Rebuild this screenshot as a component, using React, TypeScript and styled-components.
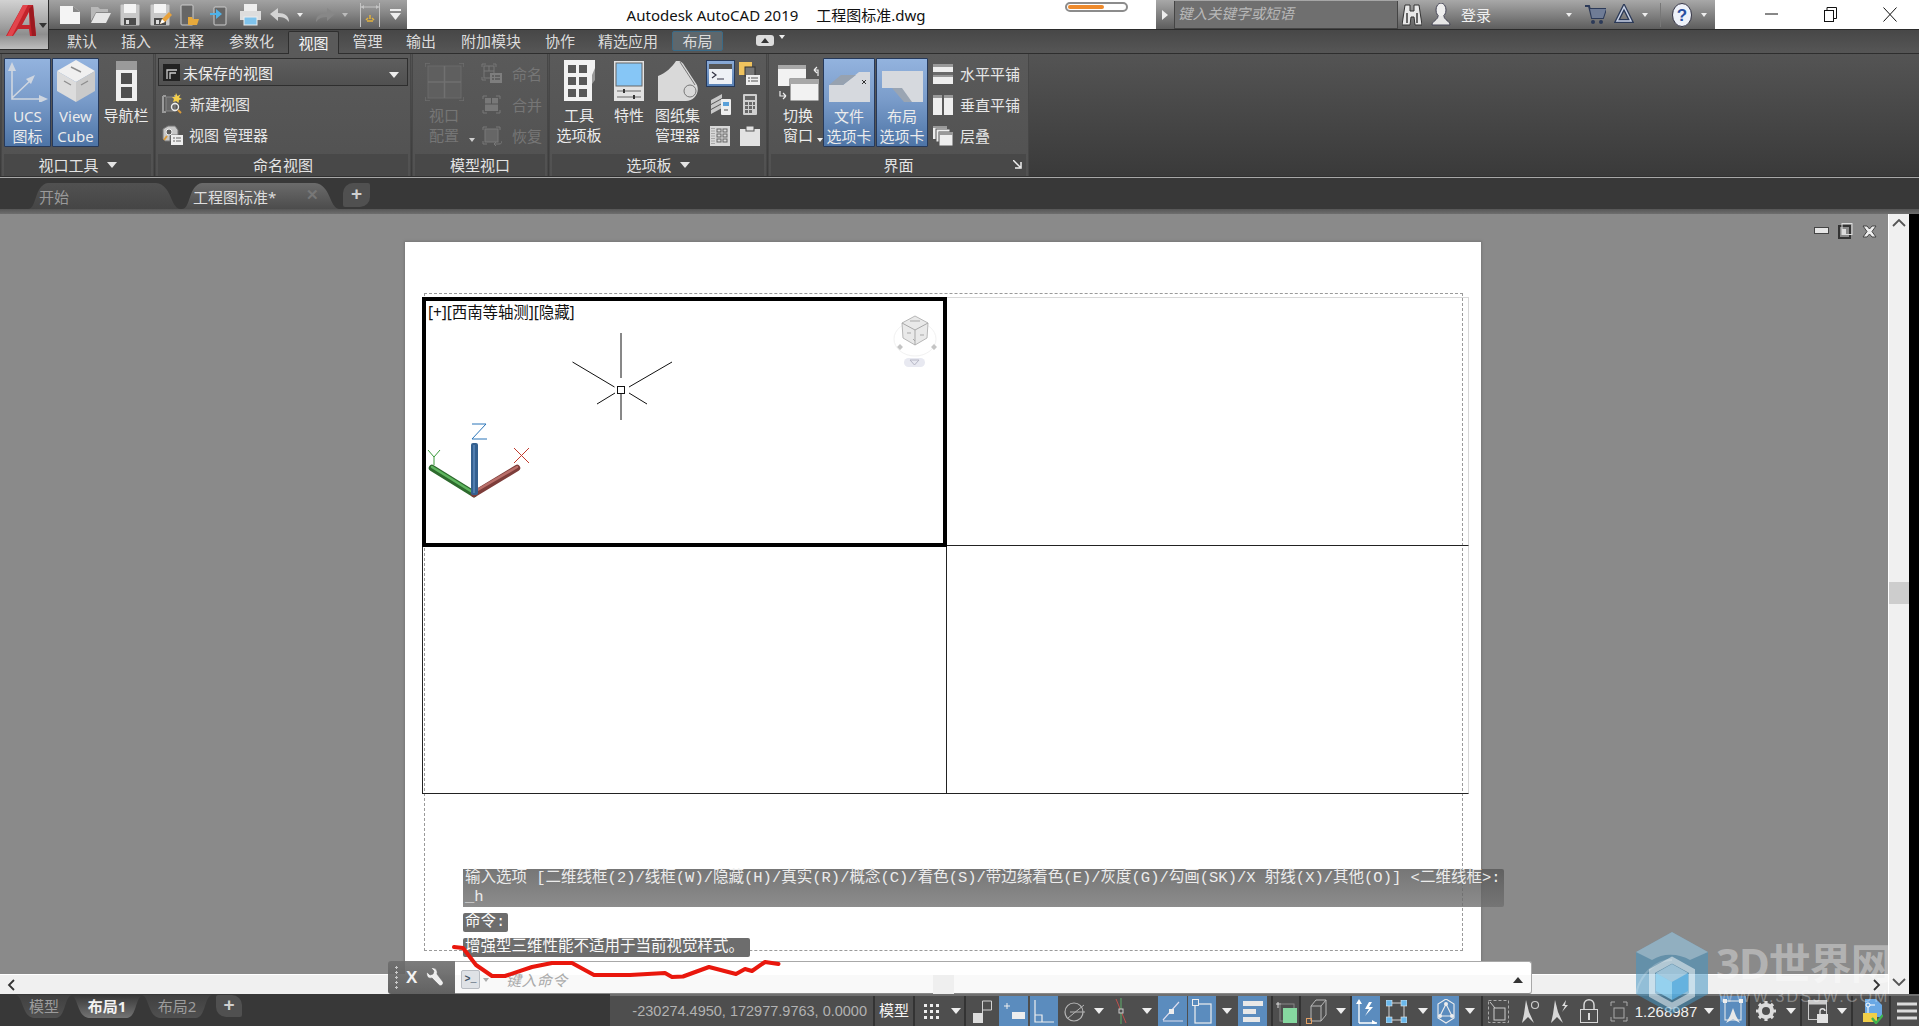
import React from 'react';
import styled, { createGlobalStyle } from 'styled-components';

const Global = createGlobalStyle`
  html, body { margin: 0; padding: 0; width: 1919px; height: 1026px; overflow: hidden; background: #383838; }
  * { box-sizing: border-box; }
  body { font-family: "Noto Sans", "Noto Sans CJK SC", sans-serif; }
`;

const Page = styled.div`position: relative; width: 1919px; height: 1026px; display: flex; flex-direction: column; overflow: hidden;`;

/* ---------- title bar ---------- */
const TitleBar = styled.header`display: flex; height: 29px; flex: none;`;
const AppButton = styled.div`
  position: absolute; left: 0; top: 0; width: 49px; height: 50px; z-index: 3;
  background: linear-gradient(#d2d2d2, #a8a8a8 45%, #8e8e8e 70%, #bdbdbd);
  border-right: 1px solid #2c2c2c; border-bottom: 1px solid #2c2c2c;
  display: flex; align-items: flex-start; padding: 3px 0 0 4px; gap: 1px;
`;
const AppCaret = styled.span`margin-top: 20px; width: 0; height: 0; border: 4px solid transparent; border-top: 5px solid #333; border-bottom: 0;`;
const Qat = styled.div`
  margin-left: 49px; width: 358px; background: linear-gradient(#a2a2a2, #8a8a8a 40%, #5c5c5c);
  display: flex; align-items: center; padding-left: 11px;
`;
const QatSlot = styled.span<{ $w: number }>`width: ${p => p.$w}px; flex: none; display: flex; align-items: center; justify-content: flex-start;`;
const TitleArea = styled.div`
  width: 750px; background: #fff; position: relative; display: flex; align-items: center; padding-left: 220px; gap: 18px;
  font-size: 15px; color: #111; white-space: nowrap;
`;
const Progress = styled.div`
  position: absolute; left: 658px; top: 2px; width: 63px; height: 10px; border: 2px solid #8c8c8c; border-radius: 5px; background: #fff;
  padding: 1px;
  &::before { content: ""; display: block; width: 36px; height: 4px; background: #ee8a2c; border-radius: 2px; }
`;
const InfoBar = styled.div`
  width: 559px; background: linear-gradient(#a8a8a8, #8a8a8a 40%, #5d5d5d); display: flex; align-items: center; color: #f0f0f0; font-size: 15px;
`;
const SearchGrip = styled.span`width: 18px; height: 100%; display: flex; align-items: center; justify-content: center;`;
const SearchBox = styled.div`
  width: 224px; height: 28px; background: #6f6f6f; border: 1px solid #444; border-top: 0; color: #b8b8b8; font-style: italic;
  font-size: 14.5px; padding: 0 0 4px 3px; display: flex; align-items: center; white-space: nowrap;
`;
const InfoSlot = styled.span<{ $w: number; $sep?: boolean }>`
  width: ${p => p.$w}px; flex: none; height: 100%; display: flex; align-items: center; justify-content: center;
  ${p => p.$sep ? 'border-right: 1px solid #777; height: 24px;' : ''}
`;
const WindowButtons = styled.div`flex: 1; background: #fff; display: flex; align-items: center;`;
const WinSlot = styled.span`width: 59px; display: flex; justify-content: center; &:first-child { margin-left: 27px; }`;

const Tri = styled.span<{ $c?: string; $s?: number }>`
  display: inline-block; flex: none; width: 0; height: 0;
  border-left: ${p => p.$s ?? 4}px solid transparent; border-right: ${p => p.$s ?? 4}px solid transparent;
  border-top: ${p => (p.$s ?? 4) + 1}px solid ${p => p.$c ?? '#eee'};
`;
const TriRight = styled.span`width: 0; height: 0; border-top: 5px solid transparent; border-bottom: 5px solid transparent; border-left: 6px solid #eee;`;

/* ---------- ribbon tabs ---------- */
const TabsRow = styled.nav`
  flex: none; height: 25px; margin-top: 0; border-top: 1px solid #2b2b2b; border-bottom: 1px solid #2e2e2e;
  background: linear-gradient(#474747, #565656); display: flex; align-items: flex-end; padding-left: 55px;
`;
const RibbonTab = styled.span<{ $w: number; $active?: boolean; $ctx?: boolean }>`
  width: ${p => p.$w}px; flex: none; text-align: center; font-size: 15px; color: #dcdcdc; line-height: 22px; height: 23px;
  ${p => p.$active ? 'background:#5a5a5a; border:1px solid #2e2e2e; border-bottom:0; border-radius:2px 2px 0 0; color:#f4f4f4; margin-bottom:-1px;' : ''}
  ${p => p.$ctx ? 'background:#5e676c; border:1px solid #3a6a86; border-radius:2px; height:20px; line-height:18px; margin-bottom:2px;' : ''}
`;
const CollapseBtn = styled.span`
  margin: 0 0 7px 33px; width: 18px; height: 11px; background: #dcdcdc; border-radius: 3px; display: flex; align-items: center; justify-content: center;
`;
const TinyUp = styled.span`width: 0; height: 0; border-left: 4px solid transparent; border-right: 4px solid transparent; border-bottom: 5px solid #333;`;
const CollapseCaret = styled.span`margin: 0 0 9px 5px;`;

/* ---------- ribbon ---------- */
const Ribbon = styled.section`
  flex: none; height: 123px; display: flex; border-bottom: 1px solid #303030;
  background: linear-gradient(#545454, #3a3a3a);
`;
const Panel = styled.div<{ $w: number }>`
  width: ${p => p.$w}px; flex: none; display: flex; flex-direction: column; margin-left: 1px;
  border-left: 1px solid #474747; border-right: 1px solid #474747;
  background: linear-gradient(#5a5a5a, #515151);
`;
const PanelBody = styled.div<{ $pad?: number }>`flex: 1; display: flex; padding: 4px 0 0 ${p => p.$pad ?? 0}px; min-height: 0; gap: 0;`;
const PanelTitle = styled.div`
  flex: none; height: 22px; background: #484848; margin: 0 2px; color: #e4e4e4; font-size: 15px; display: flex; align-items: center; justify-content: center; gap: 8px;
  position: relative; line-height: 1;
`;
const Launcher = styled.span`position: absolute; right: 4px; top: 6px; display: flex;`;
const BigTool = styled.div<{ $w: number; $on?: boolean; $off?: boolean }>`
  width: ${p => p.$w}px; flex: none; height: 89px; display: flex; flex-direction: column; align-items: center;
  color: ${p => p.$off ? '#767676' : '#ececec'}; font-size: 15px; line-height: 20px; position: relative; white-space: nowrap;
  ${p => p.$on ? 'background: linear-gradient(#93b3de, #7b9dcb 45%, #4d74a6); border: 1px solid #26395a; border-radius: 1px; margin-right: 1px;' : ''}
`;
const BigIcon = styled.div`height: 47px; flex: none; display: flex; align-items: flex-end; justify-content: center; padding-bottom: 4px;`;
const CaretAt = styled.span`position: absolute; right: 0; top: 68px;`;
const Stack = styled.div<{ $ml?: number }>`display: flex; flex-direction: column; margin-left: ${p => p.$ml ?? 0}px; flex: none;`;
const Combo = styled.div`
  width: 250px; height: 28px; margin: 0 0 2px 2px; background: linear-gradient(#5e5e5e, #505050); border: 1px solid #2e2e2e; display: flex; align-items: center;
  padding: 0 8px 0 4px; color: #eee; font-size: 15px; gap: 3px; justify-content: flex-start;
  & > i { margin-left: auto; }
`;
const SmallRow = styled.div<{ $off?: boolean; $gap?: number; $pad?: number }>`
  height: 31px; display: flex; align-items: center; gap: ${p => p.$gap ?? 7}px; padding-left: ${p => p.$pad ?? 0}px; font-size: 15px;
  color: ${p => p.$off ? '#767676' : '#e6e6e6'}; white-space: nowrap;
`;
const MiniGrid = styled.div`display: grid; grid-template-columns: 30px 29px; grid-auto-rows: 31px; align-items: center; justify-items: center;`;
const MiniOn = styled.span`width: 29px; height: 27px; background: linear-gradient(#8aaad6, #5a82b6); border: 1px solid #26395a; display: flex; align-items: center; justify-content: center;`;

/* ---------- doc tabs ---------- */
const DocBar = styled.div`
  flex: none; height: 32px; background: #383838; border-top: 1px solid #a8a8a8; display: flex; align-items: flex-end; padding: 0 0 0 28px;
`;
const tabPath = (w: number) => `path('M0 27 C9 27 6 3 20 1 L${w - 24} 1 C${w - 8} 3 ${w - 10} 25 ${w} 27 Z')`;
const DocTab = styled.div<{ $w: number; $on?: boolean }>`
  width: ${p => p.$w}px; height: 27px; flex: none; margin-right: 2px; clip-path: ${p => tabPath(p.$w)};
  background: ${p => p.$on ? 'linear-gradient(#6c6c6c, #4c4c4c)' : 'linear-gradient(#525252, #454545)'};
  color: ${p => p.$on ? '#dedede' : '#9a9a9a'}; font-size: 15px; display: flex; align-items: center; padding-left: 11px; padding-top: 1px; white-space: nowrap; position: relative;
`;
const DocClose = styled.span`position: absolute; right: 20px; top: 4px; color: #777; font-weight: 700; font-size: 15px; font-family: "Liberation Sans", sans-serif;`;
const PlusTab = styled.div`
  width: 27px; height: 24px; margin: 0 0 2px 2px; background: #505050; border-radius: 10px 2px 10px 2px; color: #d0d0d0; font: 700 19px/22px "Liberation Sans", sans-serif; text-align: center;
`;
const DocShade = styled.div`flex: none; height: 5px; background: linear-gradient(#565656, #6e6e6e);`;

/* ---------- workspace ---------- */
const Workspace = styled.div`flex: 1; min-height: 0; display: flex;`;
const WorkColumn = styled.div`width: 1888px; flex: none; display: flex; flex-direction: column;`;
const Canvas = styled.main`flex: 1; min-height: 0; background: #8a8a8a; padding: 28px 0 0 405px; overflow: hidden; position: relative;`;
const Paper = styled.div`width: 1076px; height: 760px; background: #fff; box-shadow: 0 0 2px 1px #777; padding: 51px 0 0 19px;`;
const PrintFrame = styled.div`width: 1039px; height: 658px; border: 1px dashed #9a9a9a; padding: 3px 0 0 0;`;
const ViewGrid = styled.div`width: 1047px; margin-left: -3px; display: grid; grid-template-columns: 525px 522px; grid-template-rows: 249px 248px;`;
const ActiveView = styled.div`border: 4px solid #000; position: relative; margin-bottom: -1px; background: #fff;`;
const PlainView = styled.div<{ $edges: string }>`${p => p.$edges}`;
const ViewLabel = styled.div`position: absolute; left: 2px; top: 2px; font-size: 15.5px; color: #111; white-space: nowrap; line-height: 18px; letter-spacing: -.1px;`;
const DrawingLayer = styled.svg`position: absolute; left: -4px; top: -4px;`;
const WinControls = styled.div`position: absolute; right: 11px; top: 9px; display: flex; gap: 9px; align-items: center;`;
const HScroll = styled.div`flex: none; height: 20px; background: #f0f0f0; border-top: 1px solid #fff; display: flex; align-items: center; justify-content: space-between; padding: 0 7px; color: #444;`;
const VScroll = styled.aside`
  width: 21px; flex: none; background: #f0f0f0; border-left: 1px solid #fff; display: flex; flex-direction: column; justify-content: flex-start; align-items: center; padding: 5px 0 8px; position: relative;
`;
const VThumb = styled.div`width: 100%; height: 22px; background: #cdcdcd; margin-top: 355px; margin-bottom: auto;`;
const BlackStrip = styled.div`flex: 1; background: #000;`;

/* ---------- overlays ---------- */
const HistoryBlock = styled.div`
  position: absolute; left: 463px; top: 869px; width: 1041px; height: 38px; border-radius: 0 2px 2px 0;
  background: linear-gradient(rgba(88,88,88,.82), rgba(112,112,112,.8)); color: #ececec;
  font: 15.5px/19px "Liberation Mono", "Noto Sans CJK SC", monospace; padding-left: 2px; white-space: pre;
`;
const HistoryChip = styled.div<{ $top: number; $w: number }>`
  position: absolute; left: 463px; top: ${p => p.$top}px; width: ${p => p.$w}px; height: 19px; border-radius: 2px; background: #6d6d6d; color: #fafafa;
  font: 15.5px/19px "Liberation Mono", "Noto Sans CJK SC", monospace; padding-left: 2px; white-space: pre;
`;
const CommandLine = styled.div`
  position: absolute; left: 388px; top: 961px; width: 1144px; height: 33px; display: flex; z-index: 2;
`;
const CmdHandle = styled.div`
  width: 67px; flex: none; background: linear-gradient(rgba(110,110,110,.9), rgba(90,90,90,.95)); border-radius: 3px 0 0 3px; display: flex; align-items: center; color: #f0f0f0; position: relative;
`;
const Grip = styled.span`width: 5px; height: 26px; margin-left: 6px; background-image: radial-gradient(circle, #c8c8c8 1.2px, transparent 1.4px); background-size: 5px 5px;`;
const CmdX = styled.span`margin-left: 7px; font: 700 17px/1 "Liberation Sans", sans-serif; color: #f2f2f2;`;
const CmdWrench = styled.span`margin-left: 8px; display: flex;`;
const CmdInput = styled.div`
  flex: 1; border: 1px solid #a8a8a8; border-left: 0; border-bottom-color: #888; border-radius: 0 3px 3px 0;
  background: linear-gradient(#fff 43%, #f9f9f9 43%); display: flex; align-items: center; padding: 4px 8px 0 6px; gap: 3px; position: relative;
`;
const CmdPrompt = styled.span`width: 19px; height: 19px; background: #dfe2e6; border: 1px solid #b8bcc2; border-radius: 2px; display: flex; align-items: center; justify-content: center; color: #456; font: 700 10px/1 "Liberation Mono", monospace;`;
const CmdPlaceholder = styled.span`margin-left: 14px; color: #aaa; font-size: 15px; font-style: italic; letter-spacing: .4px;`;
const CmdUp = styled.span`margin-left: auto; width: 0; height: 0; border-left: 5px solid transparent; border-right: 5px solid transparent; border-bottom: 6px solid #333;`;
const FaintThumb = styled.span`position: absolute; left: 478px; top: 13px; width: 21px; height: 19px; background: #efefef;`;
const Scribble = styled.svg`position: absolute; left: 440px; top: 940px; z-index: 4; pointer-events: none;`;
const Watermark = styled.div`position: absolute; left: 1636px; top: 930px; width: 280px; height: 84px; z-index: 4; pointer-events: none; display: flex; gap: 8px;`;
const MarkText = styled.div`padding-top: 7px; display: flex; flex-direction: column; align-items: center;`;
const MarkTitle = styled.div`font: 700 42px/52px "Noto Sans", "Noto Sans CJK SC", sans-serif; color: rgba(255,255,255,.36); white-space: nowrap; letter-spacing: -1px;`;
const MarkSub = styled.div`margin-top: -1px; font: 400 16px/18px "Liberation Sans", sans-serif; color: rgba(255,255,255,.32); letter-spacing: 2.1px; white-space: nowrap;`;

/* ---------- status bar ---------- */
const StatusBar = styled.footer`flex: none; height: 32px; background: #383838; display: flex; position: relative; z-index: 1;`;
const LayoutTabs = styled.div`width: 610px; flex: none; display: flex; align-items: flex-start; padding: 1px 0 0 16px;`;
const hang = (w: number) => `path('M0 0 C7 1 6 22 18 23 L${w - 16} 23 C${w - 6} 22 ${w - 8} 2 ${w} 0 Z')`;
const LayoutTab = styled.div<{ $w: number; $on?: boolean }>`
  width: ${p => p.$w}px; height: 23px; flex: none; margin-right: -1px; clip-path: ${p => hang(p.$w)};
  background: ${p => p.$on ? 'linear-gradient(#383838, #747474)' : 'linear-gradient(#404040, #505050)'};
  color: ${p => p.$on ? '#f2f2f2' : '#9c9c9c'}; font: ${p => p.$on ? 700 : 400} 15px/23px "Noto Sans", "Noto Sans CJK SC", sans-serif; text-align: center;
`;
const LayoutPlus = styled.div`
  width: 26px; height: 22px; margin-left: 5px; background: #505050; border-radius: 2px 10px 2px 10px; color: #cfcfcf; font: 700 19px/20px "Liberation Sans", sans-serif; text-align: center;
`;
const StatusStrip = styled.div`flex: 1; display: flex; border-top: 2px solid #6f6f6f; gap: 2px; background: #333;`;
const StatusGroup = styled.div<{ $w: number }>`width: ${p => p.$w}px; flex: none; background: #4e4e4e; display: flex; align-items: stretch;`;
const Coords = styled.div`width: 263px; flex: none; background: #4e4e4e; color: #b2b2b2; font: 14.5px/30px "Liberation Sans", sans-serif; text-align: right; padding-right: 6px;`;
const ModelTab = styled.div`width: 38px; flex: none; background: #4e4e4e; color: #f4f4f4; font-size: 15px; line-height: 29px; text-align: center;`;
const Cell = styled.span<{ $w: number; $on?: boolean; $gap?: number }>`
  width: ${p => p.$w}px; flex: none; display: flex; align-items: center; justify-content: center; margin-right: ${p => p.$gap ?? 0}px;
  ${p => p.$on ? 'background: #5b8cbe;' : ''}
`;
const ScaleText = styled.span`color: #f0f0f0; font: 15px/1 "Liberation Sans", sans-serif;`;

const S = (p: { w: number; h: number; children: React.ReactNode }) => (
  <svg width={p.w} height={p.h} viewBox={`0 0 ${p.w} ${p.h}`} fill="none" style={{ display: 'block', flex: 'none' }}>{p.children}</svg>
);

/* QAT icons */
const QNew = <S w={20} h={18}><path d="M0 0h13l7 6v12H0z" fill="#f4f4f4" /><path d="M13 0v6h7z" fill="#888" /></S>;
const QOpen = <S w={21} h={18}><path d="M1 1h7l2 2h8v3H6L1 15z" fill="#b8b8b8" /><path d="M6 7h15l-5 10H1z" fill="#e6e6e6" /></S>;
const floppy = <><rect x=".5" y=".5" width="19" height="21" rx="1" fill="#c8c8c8" /><rect x="4" y="0" width="12" height="9" fill="#f4f4f4" /><rect x="4" y="14" width="12" height="7" fill="#4c4c4c" /><rect x="6" y="16" width="3" height="4" fill="#ddd" /></>;
const QSave = <S w={20} h={22}>{floppy}</S>;
const QSaveAs = <S w={22} h={22}>{floppy}<path d="M10 20l2-5 7-7 3 3-7 7z" fill="#e8a23c" /><path d="M10 20l2-5 3 3z" fill="#fff" /></S>;
const QPhoneOpen = <S w={20} h={22}><rect x="1" y="1" width="12" height="20" rx="1" fill="#666" stroke="#ccc" /><path d="M8 13h4l1 2h6l-2 6H8z" fill="#e6a93c" /></S>;
const QPhoneUp = <S w={18} h={22}><rect x="4" y="3" width="12" height="18" rx="1" fill="#666" stroke="#ccc" /><path d="M0 9h6V5l6 5-6 5v-4H0z" fill="#4fb2e8" /></S>;
const QPrint = <S w={21} h={22}><rect x="4" y="0" width="13" height="7" fill="#eee" /><rect x="0" y="7" width="21" height="9" fill="#ddd" /><rect x="4" y="13" width="13" height="8" fill="#7fc3ec" stroke="#eee" /></S>;
const QUndo = <S w={20} h={14}><path d="M8 0L0 6l8 7V9c5 0 8 1 11 5 0-6-4-9-11-9z" fill="#d4d4d4" /></S>;
const QRedo = <S w={20} h={14}><path d="M12 0l8 6-8 7V9C7 9 4 10 1 14c0-6 4-9 11-9z" fill="#878787" /></S>;
const QMeasure = <S w={20} h={24}><path d="M.5 0v24M19.5 0v24M1 4h18" stroke="#c4c4c4" /><path d="M1 4l3-2v4zM19 4l-3-2v4z" fill="#c4c4c4" /><path d="M6 17l2-2M10 16v-4M14 17l-2-2M7 18h6" stroke="#e3b23c" strokeWidth="1.5" /></S>;
const QMenu = <S w={11} h={12}><rect width="11" height="2" fill="#eee" /><path d="M0 4h11L5.500 11z" fill="#eee" /></S>;

/* ribbon icons */
const UcsIcon = <S w={40} h={40}><path d="M4 3v34h32M4 36L24 17" stroke="#cfd6e0" strokeWidth="1.6" /><path d="M4 0l-4 9h8zM40 37l-9-4v8zM27 13l-9 4 5 5z" fill="#cfd6e0" /></S>;
const CubeIcon = <S w={38} h={42}><path d="M19 0l19 11-19 11L0 11z" fill="#f0f0f0" /><path d="M0 11l19 11v20L0 31z" fill="#dcdcdc" /><path d="M38 11L19 22v20l19-11z" fill="#cacaca" /><path d="M14 7l10 5M7 21l7 4M31 21l-7 4" stroke="#8e8e8e" strokeWidth="1.4" /></S>;
const NavIcon = <S w={21} h={40}><rect width="21" height="40" fill="#efefef" /><rect width="21" height="9" fill="#9a9a9a" /><rect x="5" y="12" width="11" height="11" fill="#4f4f4f" /><rect x="5" y="26" width="11" height="11" fill="#4f4f4f" /></S>;
const ComboIcon = <S w={17} h={17}><rect width="17" height="17" fill="#222" /><path d="M4 15V6h10M7 15V9h6" stroke="#ccc" strokeWidth="1.3" /></S>;
const NewViewIcon = <S w={21} h={22}><path d="M1 3h3M1 3v16h3M12 3h2M1 19" stroke="#9a9a9a" strokeWidth="2" /><rect x="4" y="4" width="9" height="14" fill="#666" stroke="#888" /><path d="M14 0l1.500 3 3-1.500-1.500 3 3 1.500-3 1-.5 3-2.500-2-3 1 1-3-2-2h3z" fill="#f4cf4a" /><circle cx="13" cy="14" r="3.500" stroke="#eee" strokeWidth="1.4" /><path d="M16 17l3 3" stroke="#d99a3a" strokeWidth="2" /></S>;
const MgrIcon = <S w={21} h={20}><path d="M1 14V4l5-3h7l3 4v5H8v6H3z" fill="#c8c8c8" stroke="#777" /><circle cx="7" cy="7" r="3" fill="#5e5e5e" stroke="#eee" /><path d="M2 15l3-4" stroke="#d99a3a" strokeWidth="2" /><rect x="9" y="10" width="12" height="10" fill="#eee" /><path d="M11 13h2M11 16h2M14 13h5M14 16h5" stroke="#666" /></S>;
const VpIcon = <S w={39} h={38}><path d="M0 4V0h5M34 0h5v4M0 34v4h5M34 38h5v-4" stroke="#6e6e6e" strokeWidth="1.4" /><rect x="3" y="3" width="33" height="32" fill="#5f5f5f" stroke="#6b6b6b" /><path d="M19.500 3v32M3 19h33" stroke="#707070" strokeWidth="1.5" /></S>;
const dimA = <S w={21} h={21}><path d="M1 4V1h4M12 1h3v3M1 14v3h4" stroke="#767676" /><rect x="3" y="3" width="10" height="12" stroke="#787878" /><path d="M3 8h10M8 3v5" stroke="#787878" /><rect x="9" y="10" width="12" height="10" fill="#7e7e7e" /><path d="M11 13h2M11 16h2M14 13h5M14 16h5" stroke="#444" /></S>;
const dimB = <S w={21} h={21}><path d="M2 5V2h4M15 2h4v3M2 16v3h4M15 19h4v-3" stroke="#787878" /><rect x="4" y="4" width="13" height="13" fill="#787878" /><path d="M4 10h13M10.500 4v6" stroke="#555" /></S>;
const dimC = <S w={21} h={21}><path d="M2 5V2h4M15 2h4v3M2 16v3h4" stroke="#787878" /><rect x="4" y="4" width="13" height="13" fill="#666" stroke="#787878" /><path d="M13 19h5c2 0 3-1 3-3M13 19l2-2M13 19l2 2" stroke="#787878" /></S>;
const ToolIcon = <S w={31} h={41}><path d="M0 0h31v16l-3 5v20H0z" fill="#f2f2f2" /><path d="M31 8v12l-3 4v-9z" fill="#999" /><g fill="#585858"><rect x="4" y="5" width="8" height="8" /><rect x="15" y="5" width="8" height="8" /><rect x="4" y="17" width="8" height="8" /><rect x="15" y="17" width="8" height="8" /><rect x="4" y="29" width="8" height="8" /><rect x="15" y="29" width="8" height="8" /></g></S>;
const PropIcon = <S w={30} h={40}><rect width="30" height="40" fill="#e2e2e2" /><rect x="2" y="2" width="26" height="23" fill="#86c6f6" stroke="#666" /><path d="M3 30h24M3 36h24" stroke="#666" /><path d="M10 28v4M20 34v4" stroke="#333" strokeWidth="2" /></S>;
const SheetIcon = <S w={40} h={40}><path d="M0 15C8 12 14 6 18 0c4-1 7 2 8 4l13 20c3 8-3 16-11 16H0z" fill="#d9d9d9" /><path d="M22 1l15 23" stroke="#777" /><circle cx="32" cy="30" r="6" stroke="#777" /></S>;
const CmdIcon = <S w={23} h={20}><rect width="23" height="20" fill="#eef1f6" /><rect width="23" height="5" fill="#555" /><path d="M3 8l4 3-4 3M8 15h7" stroke="#334" strokeWidth="1.2" /></S>;
const NoteIcon = <S w={21} h={23}><rect x="0" width="13" height="13" fill="#f0c35e" /><rect x="6" y="5" width="10" height="9" fill="#777" stroke="#333" /><rect x="7" y="13" width="14" height="10" fill="#eee" /><path d="M9 16h2M9 19h2M12 16h7M12 19h7" stroke="#555" /></S>;
const LayerIcon = <S w={21} h={21}><path d="M1 6l11-6v4L1 10zM1 11l11-6v4L1 15zM1 16l11-6v4L1 20z" fill="#c8c8c8" /><rect x="11" y="5" width="10" height="16" rx="1" fill="#eee" /><rect x="13" y="8" width="6" height="4" fill="#5aa0d8" /><path d="M14 16h4" stroke="#555" /></S>;
const CalcIcon = <S w={14} h={21}><rect width="14" height="21" rx="1" fill="#cfcfcf" /><rect x="2" y="2" width="10" height="4" fill="#666" /><g fill="#666"><rect x="2" y="8" width="3" height="3" /><rect x="6" y="8" width="3" height="3" /><rect x="10" y="8" width="2" height="3" /><rect x="2" y="12" width="3" height="3" /><rect x="6" y="12" width="3" height="3" /><rect x="10" y="12" width="2" height="3" /><rect x="2" y="16" width="3" height="3" /><rect x="6" y="16" width="3" height="3" /></g></S>;
const GridPal = <S w={20} h={20}><rect width="20" height="20" fill="#d8d8d8" /><path d="M2 2v16M4 2v16" stroke="#777" strokeDasharray="1 1.500" /><g stroke="#666"><rect x="7" y="3" width="4" height="3" /><rect x="13" y="3" width="4" height="3" /><rect x="7" y="8" width="4" height="3" /><rect x="13" y="8" width="4" height="3" /><rect x="7" y="13" width="4" height="3" /><rect x="13" y="13" width="4" height="3" /></g></S>;
const ClipIcon = <S w={20} h={20}><rect y="3" width="20" height="17" fill="#e2e2e2" /><rect x="6" y="0" width="8" height="5" fill="#e2e2e2" stroke="#555" /></S>;
const SwitchIcon = <S w={41} h={37}><rect y="1" width="28" height="21" fill="#f2f2f2" /><rect y="1" width="28" height="4" fill="#a8a8a8" /><path d="M36 6h4v6M36 6l3-3M36 6l3 3" stroke="#eee" strokeWidth="1.200" /><rect x="12" y="15" width="29" height="22" fill="#f2f2f2" stroke="#555" /><rect x="12" y="15" width="29" height="5" fill="#a8a8a8" /><path d="M2 27v5h6M8 32l-3-3M8 32l-3 3" stroke="#eee" strokeWidth="1.200" /></S>;
const FileTabIcon = <S w={41} h={31}><path d="M0 14h14L30 1h11v30H0z" fill="#d6d9de" /><path d="M0 14l12-10h15L14 14z" fill="#97a2b0" /><path d="M33 9l4 4M37 9l-4 4" stroke="#333" /></S>;
const LayoutTabIcon = <S w={41} h={31}><path d="M0 0h41v31H28L15 17H0z" fill="#d6d9de" /><path d="M10 17h10l10 14H22z" fill="#9aa5b3" /></S>;
const TileH = <S w={20} h={20}><rect width="20" height="20" fill="#eee" /><rect width="20" height="3" fill="#999" /><rect y="8" width="20" height="3" fill="#6a6a6a" /><rect y="11" width="20" height="2" fill="#999" /></S>;
const TileV = <S w={20} h={20}><rect width="20" height="20" fill="#eee" /><rect width="20" height="3" fill="#999" /><rect x="9" width="2" height="20" fill="#5a5a5a" /></S>;
const Cascade = <S w={20} h={20}><rect width="14" height="13" fill="#eee" /><rect width="14" height="2" fill="#999" /><rect x="3" y="3" width="14" height="13" fill="#eee" stroke="#555" /><rect x="6" y="6" width="14" height="14" fill="#eee" stroke="#555" /><rect x="6" y="6" width="14" height="3" fill="#999" /></S>;
const LaunchIcon = <S w={9} h={9}><path d="M0 0l7 7M8 2v6H2" stroke="#eee" strokeWidth="1.500" /></S>;

/* top right icons */
const Binoc = <S w={20} h={24}><path d="M3 2h5v6h4V2h5l3 20h-7l-1-8h-3l-1 8H0z" fill="#e8e8e8" stroke="#333" /><path d="M5 10v10M15 10v10" stroke="#666" strokeWidth="2" /></S>;
const UserIco = <S w={20} h={24}><ellipse cx="10" cy="7" rx="5" ry="7" fill="#eee" stroke="#445" /><path d="M7 13c0 4-6 5-6 9h18c0-4-6-5-6-9" fill="#e6e6e6" stroke="#445" /></S>;
const CartIco = <S w={21} h={21}><path d="M0 2h4l3 12h11l3-9H5" fill="none" stroke="#2c3a58" strokeWidth="2" /><path d="M5 5h16l-3 9H7z" fill="#6f7c96" /><circle cx="8" cy="18" r="2" fill="#2c3a58" /><circle cx="16" cy="18" r="2" fill="#2c3a58" /></S>;
const TriIco = <S w={20} h={21}><path d="M10 3L3 17h14z" stroke="#2c3a58" strokeWidth="4" fill="none" /><path d="M10 3L3 17h14z" stroke="#c9d2e6" strokeWidth="1.500" fill="none" /></S>;
const HelpIco = <S w={20} h={24}><ellipse cx="10" cy="12" rx="9.500" ry="11.500" fill="#eef2fa" stroke="#334" /><text x="10" y="18" textAnchor="middle" fontFamily="Liberation Sans" fontWeight="700" fontSize="17" fill="#2a50a0">?</text></S>;
const MinW = <S w={14} h={3}><path d="M0 1h13" stroke="#111" /></S>;
const MaxW = <S w={13} h={15}><rect x=".5" y="3.500" width="9" height="11" stroke="#111" /><path d="M3 3V.5h9.500v11H10" stroke="#111" /></S>;
const CloseW = <S w={14} h={15}><path d="M.5 .5l13 14M13.500 .5l-13 14" stroke="#111" /></S>;

/* status bar icons */
const sS = '#d2d2d2';
const StatIcons = {
  grid: <S w={16} h={16}><g fill="#eee">{[1, 7, 13].flatMap(x => [1, 7, 13].map(y => <rect key={x + '-' + y} x={x} y={y} width="3" height="3" />))}</g></S>,
  snap: <S w={19} h={23}><rect x="0" y="13" width="10" height="10" fill="#ddd" /><path d="M9.500 13V1h9v9H10" stroke={sS} /></S>,
  ortho: <S w={22} h={23}><path d="M1 6h6M4 3v6" stroke="#eee" /><rect x="9" y="12" width="13" height="7" fill="#eee" /></S>,
  l: <S w={20} h={23}><path d="M1 0v22h19M1 15h7v7" stroke="#eee" strokeWidth="1.200" /></S>,
  polar: <S w={21} h={21}><circle cx="10" cy="11" r="9" stroke="#b4b4b4" strokeWidth="1.200" /><path d="M4 17L20 4M6 11h15" stroke="#b4b4b4" /></S>,
  iso: <S w={14} h={26}><path d="M2 1l10 24" stroke="#c0504d" /><path d="M7 0v26" stroke="#5fae6a" /><rect x="5" y="11" width="4" height="4" fill="#4e4e4e" stroke="#ccc" /></S>,
  angle: <S w={21} h={23}><path d="M1 20L17 2M1 21h20" stroke="#dde" strokeWidth="1.200" /><rect x="7" y="9" width="5" height="5" fill="#eee" /></S>,
  box: <S w={20} h={25}><rect x="3" y="5" width="16" height="19" stroke="#eee" strokeWidth="1.200" /><rect x=".5" y=".5" width="6" height="6" fill="#5b8cbe" stroke="#eee" /></S>,
  bars: <S w={20} h={21}><rect width="20" height="5" fill="#e8e8e8" /><rect y="8" width="13" height="5" fill="#e8e8e8" /><rect y="16" width="17" height="5" fill="#e8e8e8" /></S>,
  green: <S w={21} h={24}><path d="M2 3v6M0 5h5" stroke="#ddd" /><rect x="4" y="5" width="14" height="17" stroke="#888" /><rect x="7" y="9" width="14" height="15" fill="#86d8a0" /></S>,
  cube3: <S w={21} h={25}><path d="M5 7l5-6h10v15l-5 6H5zM5 7h10v15M15 7l5-6" stroke="#b8b8b8" /><rect x=".5" y="19.500" width="5" height="5" stroke="#e3a166" /></S>,
  axes: <S w={22} h={25}><path d="M4 24V3M4 24h18" stroke="#fff" strokeWidth="1.300" /><path d="M4 0L1 5h6zM22 24l-5-3v6z" fill="#fff" /><path d="M14 3l-4 7h4l-4 7 8-9h-4l3-5z" fill="#fff" /></S>,
  sel: <S w={21} h={23}><rect x="3" y="3" width="15" height="17" stroke={sS} /><g fill="#6ab8ec" stroke="#eee" strokeWidth=".6"><rect x="0" y="0" width="6" height="6" /><rect x="15" y="0" width="6" height="6" /><rect x="0" y="17" width="6" height="6" /><rect x="15" y="17" width="6" height="6" /></g></S>,
  gizmo: <S w={20} h={25}><path d="M10 0l8 5v14l-8 5-8-5V5z" stroke="#eee" strokeWidth="1.100" /><path d="M10 5L4 17h12z" stroke="#eee" strokeWidth="1.100" /><circle cx="10" cy="5" r="2" fill="#eee" /><circle cx="4" cy="17" r="2" fill="#eee" /><circle cx="16" cy="17" r="2" fill="#eee" /></S>,
  dash: <S w={21} h={23}><rect x=".5" y=".5" width="20" height="22" stroke="#aaa" strokeDasharray="3 2" /><rect x="6" y="8" width="11" height="12" stroke="#ccc" /><path d="M2 2l5 6" stroke="#ccc" /></S>,
  annA: <S w={21} h={23}><path d="M7 0l3 12 5 11-6-6-6 6 2-9z" fill="#d8d8d8" /><circle cx="16" cy="5" r="3.500" stroke="#ccc" strokeWidth="1.200" /></S>,
  annB: <S w={21} h={23}><path d="M7 0l3 12 5 11-6-6-6 6 2-9z" fill="#d8d8d8" /><path d="M18 0l-4 6h3l-3 6 6-7h-3z" fill="#ddd" /></S>,
  lock: <S w={18} h={24}><path d="M4 11V6c0-7 10-7 10 0v5" stroke="#d8d8d8" strokeWidth="1.500" /><rect x=".5" y="10.500" width="17" height="13" stroke="#d8d8d8" /><rect x="8" y="14" width="2" height="7" fill="#ddd" /></S>,
  frame: <S w={18} h={21}><path d="M1 5V1h4M13 1h4v4M1 16v4h4M13 20h4v-4" stroke="#aaa" /><rect x="4" y="7" width="10" height="10" stroke="#aaa" /></S>,
  vp: <S w={20} h={25}><rect x="2" y="2" width="16" height="19" stroke="#eee" /><path d="M10 9l3 8 4 7-7-4-7 4 4-7z" fill="#e8e8e8" /><rect x="0" y="0" width="4" height="4" fill="#eee" /><rect x="16" y="0" width="4" height="4" fill="#eee" /></S>,
  gear: <S w={20} h={20}><circle cx="10" cy="10" r="6" stroke="#dcdcdc" strokeWidth="4" /><path d="M10 0v4M10 16v4M0 10h4M16 10h4M3 3l3 3M14 14l3 3M17 3l-3 3M6 14l-3 3" stroke="#dcdcdc" strokeWidth="3.200" /></S>,
  wlock: <S w={20} h={23}><rect x=".5" y=".5" width="18" height="19" stroke="#ccc" /><rect x=".5" y=".5" width="18" height="4" fill="#ccc" /><rect x="9" y="14" width="11" height="9" fill="#e2e2e2" /><path d="M12 14v-3c0-3 5-3 5 0" stroke="#e2e2e2" strokeWidth="1.400" /></S>,
  clean: <S w={23} h={25}><path d="M5 0h11l6 6v12H5z" fill="#6aa8e4" /><path d="M3 14h14v9H3z" fill="#f1cf48" /><circle cx="8" cy="6" r="2" stroke="#fff" /><path d="M8 8v6M10 6h5" stroke="#fff" /><path d="M12 19l4 5 7-8" stroke="#3fb24f" strokeWidth="2.400" /></S>,
  menu: <S w={20} h={18}><path d="M0 2h20M0 9h20M0 16h20" stroke="#dcdcdc" strokeWidth="3" /></S>,
};

type StatusItem = { w: number; on?: boolean; gap?: number; icon?: React.ReactNode; caret?: boolean };
const groups: { w: number; items: StatusItem[] }[] = [
  { w: 49, items: [{ w: 32, icon: StatIcons.grid }, { w: 17, caret: true }] },
  { w: 305, items: [
    { w: 33, icon: StatIcons.snap }, { w: 29, on: true, gap: 2, icon: StatIcons.ortho }, { w: 28, on: true, icon: StatIcons.l },
    { w: 33, icon: StatIcons.polar }, { w: 15, caret: true }, { w: 30, icon: StatIcons.iso }, { w: 22, caret: true },
    { w: 29, on: true, gap: 1, icon: StatIcons.angle }, { w: 28, on: true, icon: StatIcons.box }, { w: 22, caret: true }, { w: 29, on: true, icon: StatIcons.bars },
  ] },
  { w: 26, items: [{ w: 26, icon: StatIcons.green }] },
  { w: 49, items: [{ w: 30, icon: StatIcons.cube3 }, { w: 19, caret: true }] },
  { w: 129, items: [
    { w: 28, on: true, icon: StatIcons.axes }, { w: 33, icon: StatIcons.sel }, { w: 19, caret: true }, { w: 27, on: true, icon: StatIcons.gizmo }, { w: 22, caret: true },
  ] },
];
const groups2: { w: number; items: StatusItem[] }[] = [
  { w: 50, items: [{ w: 31, icon: StatIcons.gear }, { w: 19, caret: true }] },
  { w: 49, items: [{ w: 31, icon: StatIcons.wlock }, { w: 18, caret: true }] },
  { w: 36, items: [{ w: 36, icon: StatIcons.clean }] },
  { w: 31, items: [{ w: 31, icon: StatIcons.menu }] },
];
const renderGroup = (g: { w: number; items: StatusItem[] }, i: number) => (
  <StatusGroup $w={g.w} key={i}>
    {g.items.map((it, k) => (
      <Cell key={k} $w={it.w} $on={it.on} $gap={it.gap}>{it.caret ? <Tri $s={5} /> : it.icon}</Cell>
    ))}
  </StatusGroup>
);

const ModelDrawing = () => (
  <DrawingLayer width="525" height="249" viewBox="0 0 525 249">
    <g stroke="#111" strokeWidth="1">
      <path d="M199 36v45M199 95v28M150.500 65l42 25M250 65l-43 25M175 107l18-11M225 107l-18-11" />
      <rect x="195.500" y="89.500" width="7" height="7" fill="#fff" />
    </g>
    <path d="M50 127h14L50 142h15M50 146" stroke="#2a74b8" fill="none" />
    <path d="M6 153l6 7 6-7M12 160v8" stroke="#3a9a3a" fill="none" />
    <path d="M92 151l15 15M107 151l-15 15" stroke="#c0392b" fill="none" />
    <path d="M52 197L10 171" stroke="#2d6a2d" strokeWidth="6.500" strokeLinecap="round" />
    <path d="M52 196L10 170" stroke="#5fb55f" strokeWidth="2.500" strokeLinecap="round" />
    <path d="M52 197L95 171" stroke="#7d3d3a" strokeWidth="6.500" strokeLinecap="round" />
    <path d="M52 195L95 170" stroke="#b96f6a" strokeWidth="2.500" strokeLinecap="round" />
    <rect x="49" y="146" width="7" height="52" rx="2" fill="#34608f" />
    <path d="M52 148v48" stroke="#5b88bb" strokeWidth="1.500" />
    <g opacity=".85">
      <ellipse cx="493" cy="42" rx="21" ry="17" stroke="#f0f0f0" fill="none" />
      <path d="M493 19l13 7-1 15-12 7-12-7-1-15z" fill="#e6e6e6" stroke="#aaa" />
      <path d="M480 26l13 7 13-7M493 33v15" stroke="#999" fill="none" />
      <path d="M488 24h10M485 36h4M498 38h4M491 42l2 2" stroke="#999" />
      <path d="M475 50l3 3 3-3-3-3zM509 50l3 3 3-3-3-3z" fill="#bbb" />
      <rect x="482" y="61" width="21" height="9" rx="4.500" fill="#e4e6ef" />
      <path d="M488 63h9l-4.500 5z" stroke="#aab" fill="none" />
    </g>
  </DrawingLayer>
);

export default function App() {
  return (
    <Page>
      <Global />
      <AppButton>
        <S w={34} h={36}>
          <path fillRule="evenodd" d="M2 33L19 2h10l3 31h-6l-1-7H14l-5 7zM25 9l-7 13h7.500z" fill="#c3232b" />
          <path d="M19 2h5L8 33H3z" fill="#e2454c" />
          <path d="M29 2l3 31h-4L25 6z" fill="#9c1a20" />
        </S>
        <AppCaret />
      </AppButton>

      <TitleBar>
        <Qat>
          <QatSlot $w={30}>{QNew}</QatSlot>
          <QatSlot $w={30}>{QOpen}</QatSlot>
          <QatSlot $w={30}>{QSave}</QatSlot>
          <QatSlot $w={30}>{QSaveAs}</QatSlot>
          <QatSlot $w={30}>{QPhoneOpen}</QatSlot>
          <QatSlot $w={30}>{QPhoneUp}</QatSlot>
          <QatSlot $w={30}>{QPrint}</QatSlot>
          <QatSlot $w={27}>{QUndo}</QatSlot>
          <QatSlot $w={18}><Tri $s={3} /></QatSlot>
          <QatSlot $w={27}>{QRedo}</QatSlot>
          <QatSlot $w={18}><Tri $s={3} $c="#bbb" /></QatSlot>
          <QatSlot $w={30}>{QMeasure}</QatSlot>
          <QatSlot $w={12}>{QMenu}</QatSlot>
        </Qat>
        <TitleArea>
          <span>Autodesk AutoCAD 2019</span><span>工程图标准.dwg</span>
          <Progress />
        </TitleArea>
        <InfoBar>
          <SearchGrip><TriRight /></SearchGrip>
          <SearchBox>键入关键字或短语</SearchBox>
          <InfoSlot $w={28}>{Binoc}</InfoSlot>
          <InfoSlot $w={30}>{UserIco}</InfoSlot>
          <InfoSlot $w={40}>登录</InfoSlot>
          <InfoSlot $w={65} />
          <InfoSlot $w={16}><Tri $s={3} /></InfoSlot>
          <InfoSlot $w={36}>{CartIco}</InfoSlot>
          <InfoSlot $w={22}>{TriIco}</InfoSlot>
          <InfoSlot $w={20}><Tri $s={3} /></InfoSlot>
          <InfoSlot $w={6} $sep />
          <InfoSlot $w={11} />
          <InfoSlot $w={20}>{HelpIco}</InfoSlot>
          <InfoSlot $w={23}><Tri $s={3} /></InfoSlot>
        </InfoBar>
        <WindowButtons>
          <WinSlot>{MinW}</WinSlot>
          <WinSlot>{MaxW}</WinSlot>
          <WinSlot>{CloseW}</WinSlot>
        </WindowButtons>
      </TitleBar>

      <TabsRow>
        <RibbonTab $w={54}>默认</RibbonTab>
        <RibbonTab $w={54}>插入</RibbonTab>
        <RibbonTab $w={52}>注释</RibbonTab>
        <RibbonTab $w={73}>参数化</RibbonTab>
        <RibbonTab $w={51} $active>视图</RibbonTab>
        <RibbonTab $w={57}>管理</RibbonTab>
        <RibbonTab $w={50}>输出</RibbonTab>
        <RibbonTab $w={90}>附加模块</RibbonTab>
        <RibbonTab $w={48}>协作</RibbonTab>
        <RibbonTab $w={88}>精选应用</RibbonTab>
        <RibbonTab $w={51} $ctx>布局</RibbonTab>
        <CollapseBtn><TinyUp /></CollapseBtn>
        <CollapseCaret><Tri $s={3} /></CollapseCaret>
      </TabsRow>

      <Ribbon>
        <Panel $w={153}>
          <PanelBody $pad={2}>
            <BigTool $w={47} $on><BigIcon>{UcsIcon}</BigIcon><span>UCS</span><span>图标</span></BigTool>
            <BigTool $w={47} $on><BigIcon>{CubeIcon}</BigIcon><span>View</span><span>Cube</span></BigTool>
            <BigTool $w={52}><BigIcon>{NavIcon}</BigIcon><span>导航栏</span></BigTool>
          </PanelBody>
          <PanelTitle>视口工具 <Tri $s={5} $c="#e4e4e4" /></PanelTitle>
        </Panel>
        <Panel $w={256}>
          <PanelBody>
            <Stack>
              <Combo>{ComboIcon}<span>未保存的视图</span><i><Tri $s={5} /></i></Combo>
              <SmallRow $pad={6} $gap={7}>{NewViewIcon}<span>新建视图</span></SmallRow>
              <SmallRow $pad={6} $gap={6}>{MgrIcon}<span>视图 管理器</span></SmallRow>
            </Stack>
          </PanelBody>
          <PanelTitle>命名视图</PanelTitle>
        </Panel>
        <Panel $w={136}>
          <PanelBody>
            <BigTool $w={62} $off>
              <BigIcon>{VpIcon}</BigIcon><span>视口</span><span>配置</span>
              <CaretAt><Tri $s={3} $c="#cfcfcf" /></CaretAt>
            </BigTool>
            <Stack $ml={6}>
              <SmallRow $off $gap={10}>{dimA}<span>命名</span></SmallRow>
              <SmallRow $off $gap={10}>{dimB}<span>合并</span></SmallRow>
              <SmallRow $off $gap={10}>{dimC}<span>恢复</span></SmallRow>
            </Stack>
          </PanelBody>
          <PanelTitle>模型视口</PanelTitle>
        </Panel>
        <Panel $w={218}>
          <PanelBody>
            <BigTool $w={58}><BigIcon>{ToolIcon}</BigIcon><span>工具</span><span>选项板</span></BigTool>
            <BigTool $w={42}><BigIcon>{PropIcon}</BigIcon><span>特性</span></BigTool>
            <BigTool $w={55}><BigIcon>{SheetIcon}</BigIcon><span>图纸集</span><span>管理器</span></BigTool>
            <MiniGrid>
              <MiniOn>{CmdIcon}</MiniOn>{NoteIcon}
              {LayerIcon}{CalcIcon}
              {GridPal}{ClipIcon}
            </MiniGrid>
          </PanelBody>
          <PanelTitle>选项板 <Tri $s={5} $c="#e4e4e4" /></PanelTitle>
        </Panel>
        <Panel $w={261}>
          <PanelBody $pad={4}>
            <BigTool $w={50}>
              <BigIcon>{SwitchIcon}</BigIcon><span>切换</span><span>窗口</span>
              <CaretAt><Tri $s={3} /></CaretAt>
            </BigTool>
            <BigTool $w={52} $on><BigIcon>{FileTabIcon}</BigIcon><span>文件</span><span>选项卡</span></BigTool>
            <BigTool $w={52} $on><BigIcon>{LayoutTabIcon}</BigIcon><span>布局</span><span>选项卡</span></BigTool>
            <Stack $ml={4}>
              <SmallRow>{TileH}<span>水平平铺</span></SmallRow>
              <SmallRow>{TileV}<span>垂直平铺</span></SmallRow>
              <SmallRow>{Cascade}<span>层叠</span></SmallRow>
            </Stack>
          </PanelBody>
          <PanelTitle>界面<Launcher>{LaunchIcon}</Launcher></PanelTitle>
        </Panel>
      </Ribbon>

      <DocBar>
        <DocTab $w={152}>开始</DocTab>
        <DocTab $w={157} $on>工程图标准*<DocClose>✕</DocClose></DocTab>
        <PlusTab>+</PlusTab>
      </DocBar>
      <DocShade />

      <Workspace>
        <WorkColumn>
          <Canvas>
            <Paper>
              <PrintFrame>
                <ViewGrid>
                  <ActiveView>
                    <ModelDrawing />
                    <ViewLabel>[+][西南等轴测][隐藏]</ViewLabel>
                  </ActiveView>
                  <PlainView $edges="border-top:1px solid #d8d8d8;border-right:1px solid #d8d8d8;border-bottom:1px solid #222;" />
                  <PlainView $edges="border-left:1px solid #222;border-right:1px solid #222;border-bottom:1px solid #222;" />
                  <PlainView $edges="border-right:1px solid #d8d8d8;border-bottom:1px solid #222;" />
                </ViewGrid>
              </PrintFrame>
            </Paper>
            <WinControls>
              <S w={15} h={8}><rect x=".5" y=".5" width="14" height="6" fill="#e6e6e6" stroke="#444" /></S>
              <S w={15} h={16}><rect x="1" y="3" width="11" height="12" fill="none" stroke="#333" strokeWidth="2" /><rect x="4" y="0.500" width="10" height="11" fill="none" stroke="#ddd" /><rect x="4" y="6" width="4" height="5" fill="#ddd" /></S>
              <S w={15} h={13}><path d="M1 1h4l2.500 3L10 1h4l-4 5.500 4 5.500h-4L7.500 9 5 12H1l4-5.500z" fill="#eee" stroke="#444" /></S>
            </WinControls>
          </Canvas>
          <HScroll>
            <S w={8} h={12}><path d="M7 1L2 6l5 5" stroke="#333" strokeWidth="1.800" /></S>
            <S w={8} h={12}><path d="M1 1l5 5-5 5" stroke="#333" strokeWidth="1.800" /></S>
          </HScroll>
        </WorkColumn>
        <VScroll>
          <S w={14} h={8}><path d="M1 7l6-6 6 6" stroke="#555" strokeWidth="1.800" /></S>
          <VThumb />
          <S w={14} h={8}><path d="M1 1l6 6 6-6" stroke="#555" strokeWidth="1.800" /></S>
        </VScroll>
        <BlackStrip />
      </Workspace>

      <StatusBar>
        <LayoutTabs>
          <LayoutTab $w={56}>模型</LayoutTab>
          <LayoutTab $w={72} $on>布局1</LayoutTab>
          <LayoutTab $w={70}>布局2</LayoutTab>
          <LayoutPlus>+</LayoutPlus>
        </LayoutTabs>
        <StatusStrip>
          <Coords>-230274.4950, 172977.9763, 0.0000</Coords>
          <ModelTab>模型</ModelTab>
          {groups.map(renderGroup)}
          <StatusGroup $w={265}>
            <Cell $w={31}>{StatIcons.dash}</Cell>
            <Cell $w={30}>{StatIcons.annA}</Cell>
            <Cell $w={29}>{StatIcons.annB}</Cell>
            <Cell $w={31}>{StatIcons.lock}</Cell>
            <Cell $w={30}>{StatIcons.frame}</Cell>
            <Cell $w={64}><ScaleText>1.268987</ScaleText></Cell>
            <Cell $w={22}><Tri $s={5} /></Cell>
            <Cell $w={26} $on>{StatIcons.vp}</Cell>
          </StatusGroup>
          {groups2.map(renderGroup)}
        </StatusStrip>
      </StatusBar>

      <HistoryBlock>{'输入选项 [二维线框(2)/线框(W)/隐藏(H)/真实(R)/概念(C)/着色(S)/带边缘着色(E)/灰度(G)/勾画(SK)/X 射线(X)/其他(O)] <二维线框>:\n_h'}</HistoryBlock>
      <HistoryChip $top={913} $w={45}>命令:</HistoryChip>
      <HistoryChip $top={938} $w={287}>增强型三维性能不适用于当前视觉样式。</HistoryChip>

      <CommandLine>
        <CmdHandle>
          <Grip />
          <CmdX>X</CmdX>
          <CmdWrench>
            <S w={18} h={20}><path d="M2 4l3 3 3-1 1-3-3-3c4-1 7 2 6 6l6 8c1 2-2 5-4 3L7 10C3 11 1 8 2 4z" fill="#eee" stroke="#666" strokeWidth=".6" /></S>
          </CmdWrench>
        </CmdHandle>
        <CmdInput>
          <FaintThumb />
          <CmdPrompt>{'>_'}</CmdPrompt>
          <Tri $s={3} $c="#aaa" />
          <CmdPlaceholder>键入命令</CmdPlaceholder>
          <CmdUp />
        </CmdInput>
      </CommandLine>

      <Watermark>
        <S w={72} h={84}>
          <path d="M36 2l36 20v42L36 84 0 64V22z" fill="rgba(70,150,195,.55)" />
          <path d="M36 2l36 20-18 8c-10-6-26-8-38 0L0 22z" fill="rgba(190,205,215,.5)" />
          <path d="M36 30l20 11v24L36 76 16 65V41z" fill="none" stroke="rgba(255,255,255,.5)" strokeWidth="6" />
          <path d="M36 34l16 9-16 9-16-9z" fill="rgba(170,205,225,.8)" />
          <path d="M20 43l16 9v18l-16-9z" fill="rgba(150,215,245,.75)" />
          <path d="M52 43l-16 9v18l16-9z" fill="rgba(90,175,225,.8)" />
          <path d="M0 64c4-20 20-34 36-34" fill="none" stroke="rgba(255,255,255,.2)" strokeWidth="2" />
        </S>
        <MarkText>
          <MarkTitle>3D世界网</MarkTitle>
          <MarkSub>WWW.3DSJW.COM</MarkSub>
        </MarkText>
      </Watermark>

      <Scribble width="345" height="42" viewBox="0 0 345 42">
        <path d="M14 7l9 1 13 17 16 11h13l27-9 20-4h20l22 12h36l35-2 7 4 11-.5 26-9.500 27 7 9-5 7 2 13-9 13.500 2" fill="none" stroke="#e9170d" strokeWidth="4" strokeLinecap="round" strokeLinejoin="round" />
      </Scribble>
    </Page>
  );
}
